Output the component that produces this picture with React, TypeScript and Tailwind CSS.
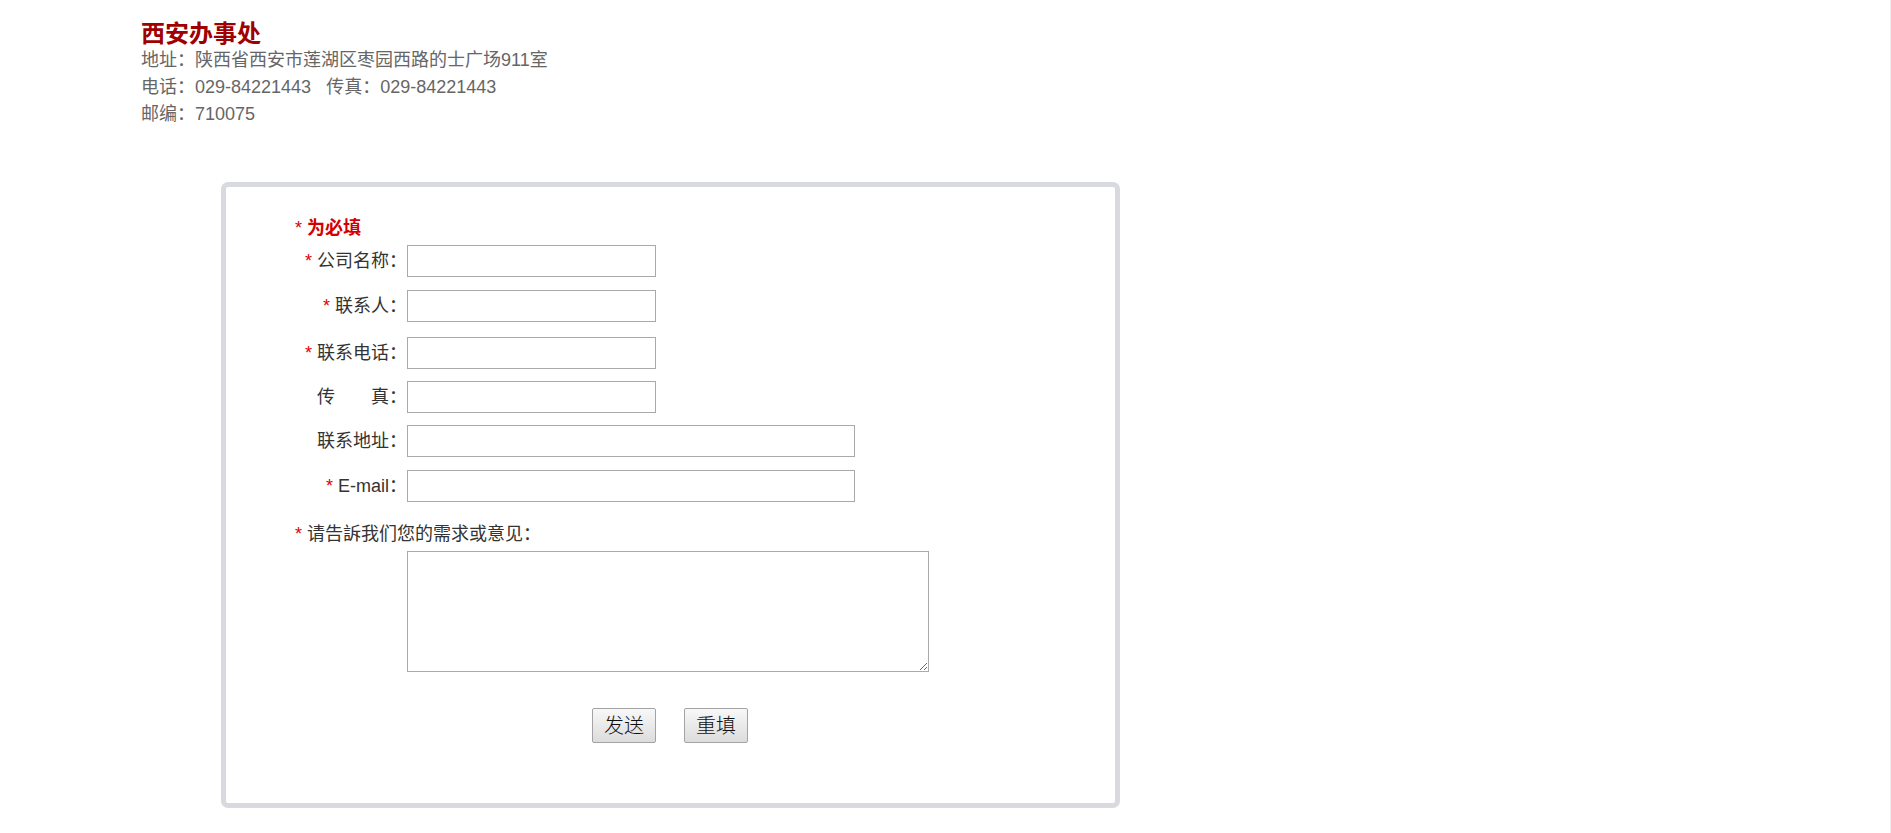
import React from "react";

const fields = [
  { label: "公司名称：", required: true, wide: false, gap: "mt-0" },
  { label: "联系人：", required: true, wide: false, gap: "mt-[13px]" },
  { label: "联系电话：", required: true, wide: false, gap: "mt-[15px]" },
  { label: "传\u3000\u3000真：", required: false, wide: false, gap: "mt-[12px]" },
  { label: "联系地址：", required: false, wide: true, gap: "mt-[12px]" },
  { label: "E-mail：", required: true, wide: true, gap: "mt-[13px]" },
];

function Star() {
  return (
    <>
      <span className="text-[#e00000]">*</span>{" "}
    </>
  );
}

export default function App() {
  return (
    <div
      className="flex min-h-screen bg-white"
      style={{ fontFamily: '"Liberation Sans", "Noto Sans CJK SC", sans-serif' }}
    >
      <main className="flex-1">
        {/* Office info */}
        <div className="pl-[141px] pt-[21px]">
          <h2 className="text-[24px] font-bold leading-[26px] text-[#a00000]">西安办事处</h2>
          <div className="text-[18px] leading-[27px] text-[#666]">
            <p>地址：陕西省西安市莲湖区枣园西路的士广场911室</p>
            <p>电话：029-84221443{"\u00a0\u00a0\u00a0"}传真：029-84221443</p>
            <p>邮编：710075</p>
          </div>
        </div>

        {/* Feedback form */}
        <div className="ml-[221px] mt-[54px] w-[899px] rounded-[7px] border-[5px] border-[#d9dadf] bg-white pl-[69px] pt-[29px] pb-[60px]">
          <div className="text-[18px] font-bold leading-[24px] text-[#d40000]">
            <span className="font-normal">*</span> 为必填
          </div>

          <div className="mt-[5px] flex flex-col">
            {fields.map((f) => (
              <div key={f.label} className={`grid grid-cols-[112px_auto] items-center ${f.gap}`}>
                <label className="whitespace-nowrap text-right text-[18px] leading-[27px] text-[#333]">
                  {f.required && <Star />}
                  {f.label}
                </label>
                <input
                  type="text"
                  className={`h-[32px] border border-[#a9a9a9] bg-white px-1 text-[16px] outline-none ${
                    f.wide ? "w-[448px]" : "w-[249px]"
                  }`}
                />
              </div>
            ))}
          </div>

          <div className="mt-[19px] text-[18px] leading-[27px] text-[#333]">
            <Star />
            请告訴我们您的需求或意见：
          </div>
          <textarea className="ml-[112px] mt-[3px] block h-[121px] w-[522px] border border-[#a9a9a9] bg-white p-1 text-[16px] outline-none" />

          <div className="ml-[297px] mt-[36px] flex gap-[28px]">
            <button className="h-[35px] w-[64px] rounded-[2px] border border-[#a3a3a3] bg-linear-to-b from-[#f8f8f8] to-[#dcdcdc] text-[20px] font-light leading-none text-[#111]">
              发送
            </button>
            <button className="h-[35px] w-[64px] rounded-[2px] border border-[#a3a3a3] bg-linear-to-b from-[#f8f8f8] to-[#dcdcdc] text-[20px] font-light leading-none text-[#111]">
              重填
            </button>
          </div>
        </div>
      </main>
      <div className="w-px bg-[#ececec]" />
    </div>
  );
}
